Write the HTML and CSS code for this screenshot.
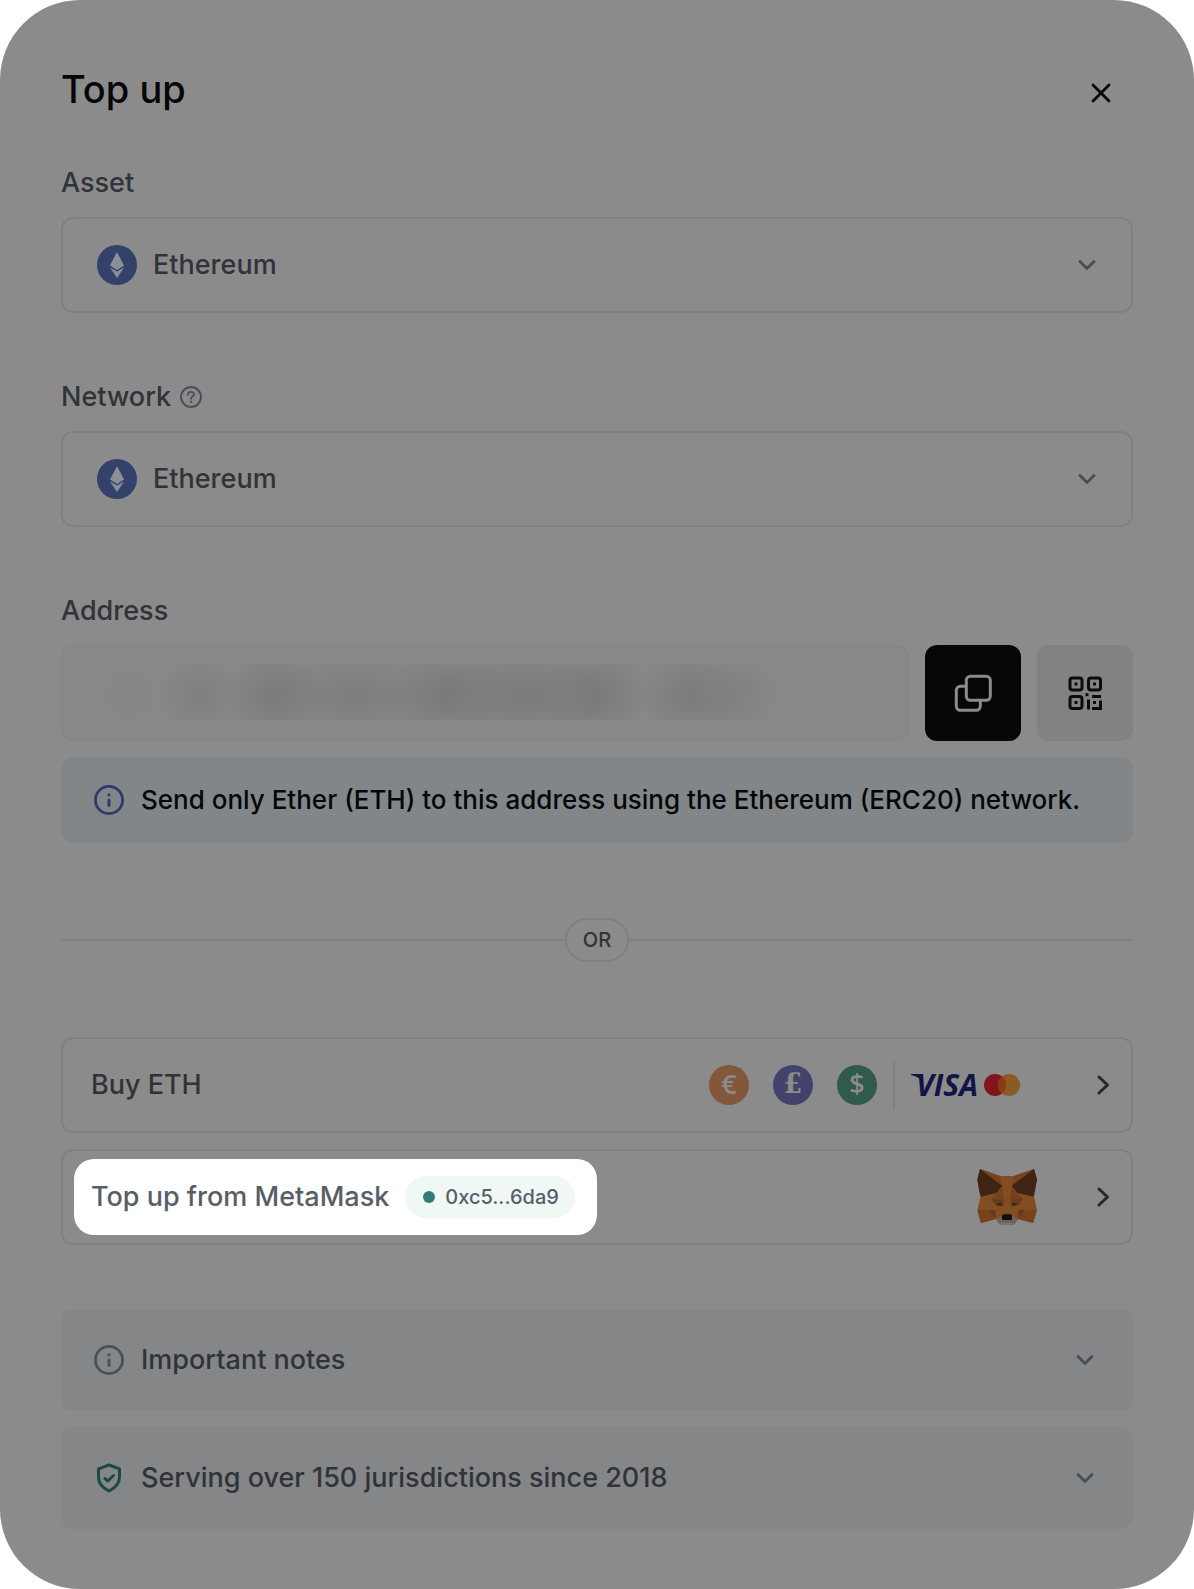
FILE: index.html
```html
<!DOCTYPE html>
<html lang="en">
<head>
    <meta charset="UTF-8">
    <meta name="viewport" content="width=device-width, initial-scale=1.0">
    <title>Top up</title>
    <link rel="stylesheet" href="styles.css">
</head>
<body>
    <!-- shared icons -->
    <svg class="sprite" aria-hidden="true">
        <symbol id="eth" viewBox="0 0 40 40">
            <circle cx="20" cy="20" r="20" fill="#34426b"/>
            <path d="M20 7 L27 20.500 L20 25 L13 20.500 Z" fill="#8c8f96"/>
            <path d="M13 22.500 L20 26.500 L27 22.500 L20 33 Z" fill="#8c8f96"/>
        </symbol>
        <symbol id="chevron-down" viewBox="0 0 24 24">
            <path d="M5 8.500 L12 15.500 L19 8.500" fill="none" stroke="currentColor" stroke-width="2.800" stroke-linecap="round" stroke-linejoin="round"/>
        </symbol>
        <symbol id="chevron-right" viewBox="0 0 24 24">
            <path d="M9 4 L17.500 12 L9 20" fill="none" stroke="currentColor" stroke-width="3" stroke-linecap="round" stroke-linejoin="round"/>
        </symbol>
        <symbol id="info" viewBox="0 0 32 32">
            <circle cx="16" cy="16" r="13.600" fill="none" stroke="currentColor" stroke-width="2.800"/>
            <circle cx="16" cy="10.800" r="1.600" fill="currentColor"/>
            <path d="M16 16 V21.500" stroke="currentColor" stroke-width="3" stroke-linecap="round"/>
        </symbol>
    </svg>

    <main class="card">
        <header class="header">
            <h1>Top up</h1>
            <button class="close" aria-label="Close">
                <svg viewBox="0 0 24 24"><path d="M4 4 L20 20 M20 4 L4 20" fill="none" stroke="currentColor" stroke-width="2.800" stroke-linecap="round"/></svg>
            </button>
        </header>

        <div class="field">
            <label for="asset">Asset</label>
            <div class="select-box">
                <svg class="coin"><use href="#eth"/></svg>
                <select id="asset"><option>Ethereum</option></select>
                <svg class="chevron"><use href="#chevron-down"/></svg>
            </div>
        </div>

        <div class="field">
            <div class="label-row">
                <label for="network">Network</label>
                <svg class="help" viewBox="0 0 24 24">
                    <circle cx="12" cy="12" r="10" fill="none" stroke="currentColor" stroke-width="2"/>
                    <path d="M9 9.700 C9 6 15 6 15 9.500 C15 11.600 12 11.600 12 13.800" fill="none" stroke="currentColor" stroke-width="1.900" stroke-linecap="round"/>
                    <circle cx="12" cy="16.800" r="1.200" fill="currentColor"/>
                </svg>
            </div>
            <div class="select-box">
                <svg class="coin"><use href="#eth"/></svg>
                <select id="network"><option>Ethereum</option></select>
                <svg class="chevron"><use href="#chevron-down"/></svg>
            </div>
        </div>

        <div class="field">
            <label for="address">Address</label>
            <div class="address-row">
                <div class="address-box">
                    <input type="text" id="address" readonly>
                </div>
                <button class="square copy" aria-label="Copy address">
                    <svg viewBox="0 0 40 40" fill="none" stroke="currentColor" stroke-width="3">
                        <rect x="13.300" y="3.300" width="24" height="24" rx="4"/>
                        <path d="M13 13.300 H7.300 A4 4 0 0 0 3.300 17.300 V33.300 A4 4 0 0 0 7.300 37.300 H23.300 A4 4 0 0 0 27.300 33.300 V28"/>
                    </svg>
                </button>
                <button class="square qr" aria-label="Show QR code">
                    <svg viewBox="0 0 40 40" fill="none" stroke="currentColor" stroke-width="3">
                        <rect x="5" y="5" width="12" height="12" rx="2.500"/>
                        <rect x="23.500" y="5" width="12" height="12" rx="2.500"/>
                        <rect x="5" y="23.500" width="12" height="12" rx="2.500"/>
                        <path d="M9.500 11 h3 M28 11 h3 M9.500 29.500 h3 M28 29.500 h3 M20.500 21.800 h3"/>
                        <path d="M27 23.500 H36 M23.500 26.500 V36.500 M27 35.500 H35.500 V27.500"/>
                    </svg>
                </button>
            </div>
            <div class="message">
                <svg class="icon"><use href="#info"/></svg>
                <span>Send only Ether (ETH) to this address using the Ethereum (ERC20) network.</span>
            </div>
        </div>

        <div class="divider"><span>OR</span></div>

        <div class="options">
            <button class="option">
                <span>Buy ETH</span>
                <span class="payments">
                    <span class="currencies">
                        <span class="currency euro">€</span>
                        <span class="currency pound">£</span>
                        <span class="currency dollar">$</span>
                    </span>
                    <svg class="visa" viewBox="0 0 66 22" role="img" aria-label="Visa">
                        <text class="visa-text" x="5" y="22">VISA</text>
                        <path d="M0 0 H8 L12 8 C9 4 5 2 0 1 Z" fill="#111545"/>
                    </svg>
                    <svg class="mastercard" viewBox="0 0 36 22" role="img" aria-label="Mastercard">
                        <circle cx="11" cy="11" r="11" fill="#81161a"/>
                        <circle cx="25" cy="11" r="11" fill="#8a5b23"/>
                        <path d="M18 2.500 A11 11 0 0 1 18 19.500 A11 11 0 0 1 18 2.500 Z" fill="#8b3a15"/>
                    </svg>
                </span>
                <svg class="chevron"><use href="#chevron-right"/></svg>
            </button>

            <button class="option metamask">
                <span class="spotlight">
                    <span>Top up from MetaMask</span>
                    <span class="wallet"><i class="dot"></i>0xc5...6da9</span>
                </span>
                <svg class="fox" viewBox="111 87 180 168">
                    <path d="M120 87 L180 108 H222 L282 87 L291 118 L282 170 L291 210 L279 249 L235 237 L220 255 H182 L167 237 L123 249 L112 210 L122 170 L112 118 Z" fill="#824d20"/>
                    <path d="M120 87 L180 108 L187 137 Z M282 87 L222 108 L215 137 Z" fill="#77421e"/>
                    <path d="M120 87 L187 137 L170 158 L122 170 L117 150 L112 118 Z M282 87 L215 137 L232 158 L280 170 L285 150 L291 118 Z" fill="#3d2414"/>
                    <path d="M187 137 L191 178 L154 177 L170 158 Z M215 137 L211 178 L248 177 L232 158 Z" fill="#75421f"/>
                    <path d="M112 210 H166 L167 237 L123 249 Z M291 210 H236 L235 237 L279 249 Z" fill="#77431f"/>
                    <path d="M148 210 H166 L167 235 Z M254 210 H236 L235 235 Z" fill="#65371c"/>
                    <path d="M154 177 L191 178 L189 200 L180 188 L166 194 Z M248 177 L211 178 L213 200 L222 188 L236 194 Z" fill="#68391c"/>
                    <path d="M167 195 L178 188 L183 189 L187 198 Z M235 195 L224 188 L219 189 L215 198 Z" fill="#202b35"/>
                    <path d="M167 237 L185 230 H217 L235 237 L220 255 H182 Z" fill="#6e625b"/>
                    <path d="M182 249 H220 V255 H182 Z" fill="#7a726c"/>
                    <path d="M189 223 H213 L216 227 V240 H186 V227 Z" fill="#0f0f10"/>
                </svg>
                <svg class="chevron"><use href="#chevron-right"/></svg>
            </button>
        </div>

        <div class="notes">
            <button class="note">
                <svg class="icon"><use href="#info"/></svg>
                <span>Important notes</span>
                <svg class="chevron"><use href="#chevron-down"/></svg>
            </button>
            <button class="note">
                <svg class="icon shield" viewBox="0 0 32 32" fill="none" stroke="currentColor" stroke-width="3" stroke-linecap="round" stroke-linejoin="round">
                    <path d="M16 3 L26.500 6.800 V15 C26.500 21.500 22 26 16 29 C10 26 5.500 21.500 5.500 15 V6.800 Z"/>
                    <path d="M11.800 16.500 L14.800 19 L20.500 13.500"/>
                </svg>
                <span>Serving over 150 jurisdictions since 2018</span>
                <svg class="chevron"><use href="#chevron-down"/></svg>
            </button>
        </div>
    </main>
</body>
</html>
```

FILE: styles.css
```css
* {
    box-sizing: border-box;
}
body {
    margin: 0;
    background-color: white;
    font-family: Inter, Arial, sans-serif;
    font-size: 27px;
    font-weight: 500;
    line-height: 40px;
    color: #303338;
}
button,
select,
input {
    font: inherit;
    color: inherit;
    border: none;
    background: none;
    padding: 0;
    margin: 0;
}
button {
    cursor: pointer;
    text-align: left;
}
svg {
    display: block;
    flex-shrink: 0;
}
.sprite {
    position: absolute;
    width: 0;
    height: 0;
}
.card {
    min-height: 100vh;
    padding: 66px 61px 60px;
    background-color: #8b8b8b;
    border-radius: 80px;
}

/* header */
.header {
    display: flex;
    align-items: flex-start;
    justify-content: space-between;
    margin-bottom: 51px;
}
h1 {
    margin: 0;
    font-size: 38px;
    font-weight: 500;
    line-height: 46px;
    color: #050607;
}
.close {
    padding: 15px 20px 0;
    color: #050607;
}
.close svg {
    width: 24px;
    height: 24px;
}

/* fields */
.field {
    margin-bottom: 64px;
}
.field label {
    display: block;
}
.label-row {
    display: flex;
    align-items: center;
    gap: 8px;
}
.help {
    width: 24px;
    height: 24px;
    color: #4b5158;
}
.select-box {
    display: flex;
    align-items: center;
    gap: 16px;
    height: 96px;
    margin-top: 14px;
    padding: 0 32px 0 34px;
    border: 2px solid #7c8185;
    border-radius: 12px;
}
.select-box select {
    flex: 1;
    min-width: 0;
    height: 40px;
    appearance: none;
}
.coin {
    width: 40px;
    height: 40px;
}
.chevron {
    width: 24px;
    height: 24px;
    color: #484e54;
}

/* address */
.address-row {
    display: flex;
    gap: 16px;
    margin: 14px 0 16px;
}
.address-box {
    flex: 1;
    min-width: 0;
    height: 96px;
    padding: 17px 30px;
    border: 2px solid #858686;
    border-radius: 12px;
    background-color: #888888;
}
/* the address itself is hidden behind soft blobs */
.address-box input {
    display: block;
    width: 100%;
    height: 56px;
    background-image:
        radial-gradient(40px 40px at 36px 31px, #868688, transparent),
        radial-gradient(42px 40px at 106px 31px, #7e7f81, transparent),
        radial-gradient(52px 46px at 182px 31px, #797a7c, transparent),
        radial-gradient(80px 44px at 262px 31px, #7c7d7f, transparent),
        radial-gradient(60px 48px at 352px 31px, #78797b, transparent),
        radial-gradient(90px 46px at 430px 31px, #797a7c, transparent),
        radial-gradient(56px 48px at 502px 31px, #78797b, transparent),
        radial-gradient(52px 46px at 596px 31px, #7a7b7d, transparent),
        radial-gradient(46px 40px at 640px 31px, #7f8082, transparent);
}
.square {
    display: flex;
    align-items: center;
    justify-content: center;
    width: 96px;
    height: 96px;
    border-radius: 12px;
}
.square svg {
    width: 40px;
    height: 40px;
}
.copy {
    background-color: #050607;
    color: #8b8b8b;
}
.qr {
    background-color: #848280;
    color: #0a0b0d;
}
.message {
    display: flex;
    align-items: center;
    gap: 16px;
    min-height: 86px;
    padding: 22px 32px;
    border-radius: 12px;
    background-color: #828688;
    font-size: 26px;
    color: #050607;
}
.icon {
    width: 32px;
    height: 32px;
    color: #4b5158;
}
.message .icon {
    color: #2c3d6b;
}

/* divider */
.divider {
    display: flex;
    align-items: center;
    margin: 75px 0;
}
.divider::before,
.divider::after {
    content: "";
    flex: 1;
    height: 2px;
    background-color: #7c8185;
}
.divider span {
    width: 64px;
    border: 2px solid #7c8185;
    border-radius: 22px;
    font-size: 20px;
    text-align: center;
}

/* payment options */
.options,
.notes {
    display: flex;
    flex-direction: column;
    gap: 16px;
}
.option {
    display: flex;
    align-items: center;
    height: 96px;
    padding: 0 17px 0 28px;
    border: 2px solid #7c8185;
    border-radius: 12px;
}
.option .chevron {
    color: #25282e;
}
.payments {
    display: flex;
    align-items: center;
    margin-left: auto;
    margin-right: 70px;
}
.currencies {
    display: flex;
    gap: 24px;
    margin-right: 16px;
    padding: 4px 16px 4px 0;
    border-right: 2px solid #7c8185;
}
.currency {
    width: 40px;
    height: 40px;
    border-radius: 50%;
    text-align: center;
    font-family: "Open Sans", sans-serif;
    font-size: 27px;
    font-weight: 600;
    line-height: 38px;
    color: #8b8b8b;
}
.euro {
    background-color: #82573a;
}
.pound {
    background-color: #43426a;
    font-family: "DejaVu Serif", serif;
}
.dollar {
    background-color: #305a49;
}
.visa {
    width: 66px;
    height: 22px;
    margin-right: 7px;
    overflow: visible;
}
.visa-text {
    font-family: "Open Sans", sans-serif;
    font-size: 30px;
    font-weight: 700;
    font-style: italic;
    fill: #111545;
}
.mastercard {
    width: 36px;
    height: 22px;
}
.metamask {
    padding-left: 11px;
}
.spotlight {
    display: flex;
    align-items: center;
    gap: 16px;
    height: 76px;
    padding: 0 22px 0 17px;
    border-radius: 20px;
    background-color: white;
    color: #575e68;
}
.wallet {
    display: flex;
    align-items: center;
    gap: 10px;
    height: 42px;
    padding: 0 16px 0 18px;
    border-radius: 21px;
    background-color: #f0f8f6;
    font-size: 20px;
}
.dot {
    width: 12px;
    height: 12px;
    border-radius: 50%;
    background-color: #327d7a;
}
.fox {
    width: 60px;
    height: 56px;
    margin-left: auto;
    margin-right: 53px;
}

/* notes */
.notes {
    margin-top: 64px;
}
.note {
    display: flex;
    align-items: center;
    gap: 16px;
    min-height: 102px;
    padding: 0 36px 0 32px;
    border-radius: 12px;
    background-color: #858688;
}
.note .chevron {
    margin-left: auto;
}
.shield {
    color: #1c4846;
}
```
